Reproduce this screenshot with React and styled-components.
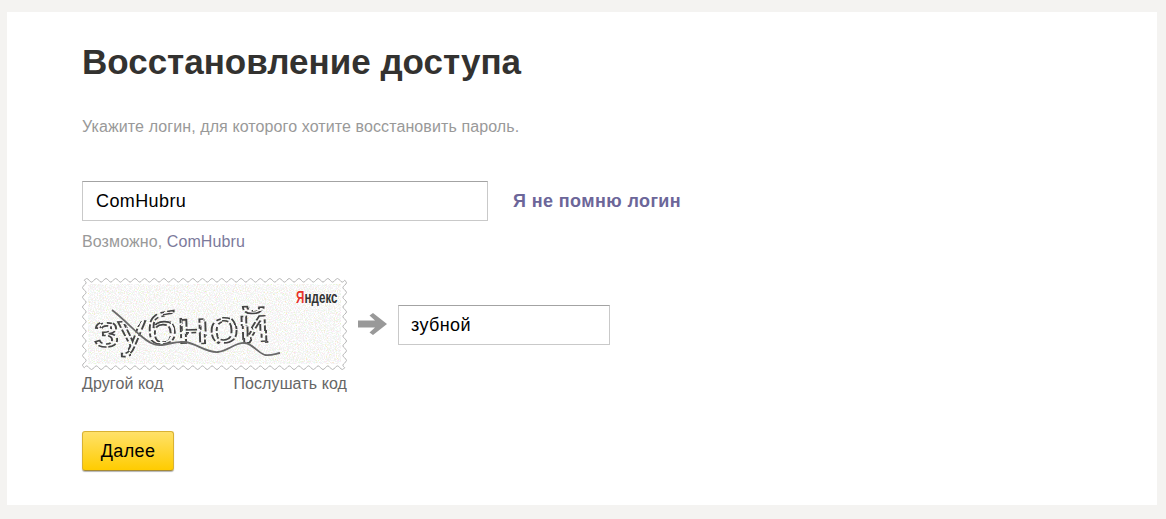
import React from "react";
import styled, { createGlobalStyle } from "styled-components";

const Global = createGlobalStyle`
  html, body {
    margin: 0;
    padding: 0;
    background: #f4f3f1;
  }
  body {
    font-family: "Liberation Sans", Arial, sans-serif;
  }
`;

const Page = styled.div`
  padding: 12px 9px 14px 7px;
`;

const Card = styled.main`
  height: 493px;
  box-sizing: border-box;
  padding: 29px 75px 0;
  background: #fff;
`;

const Title = styled.h1`
  margin: 0;
  font-size: 35px;
  line-height: 42px;
  font-weight: 700;
  color: #333230;
`;

const Lead = styled.p`
  margin: 34px 0 0;
  font-size: 16px;
  line-height: 20px;
  letter-spacing: 0.1px;
  color: #999;
`;

const LoginRow = styled.div`
  display: flex;
  align-items: center;
  gap: 25px;
  margin-top: 44px;
`;

const Field = styled.input`
  box-sizing: border-box;
  width: ${(p) => p.$width}px;
  height: 40px;
  padding: 0 13px;
  border: 1px solid #c9c9c9;
  border-top-color: #a3a3a3;
  border-radius: 0;
  outline: none;
  background: #fff;
  font-family: inherit;
  font-size: 18px;
  letter-spacing: 0.4px;
  color: #000;
`;

const Forgot = styled.a`
  font-size: 18px;
  font-weight: 700;
  letter-spacing: 0.4px;
  color: #6c6699;
  text-decoration: none;
`;

const Hint = styled.div`
  margin-top: 12px;
  font-size: 16px;
  line-height: 18px;
  letter-spacing: 0.1px;
  color: #999;
`;

const HintLink = styled.a`
  color: #7c7a9c;
`;

const CaptchaRow = styled.div`
  display: flex;
  align-items: flex-start;
  margin-top: 27px;
`;

const CaptchaBox = styled.div`
  width: 265px;
`;

const CaptchaLinks = styled.div`
  display: flex;
  justify-content: space-between;
  margin-top: 4px;
  font-size: 16px;
  line-height: 20px;
  letter-spacing: 0.1px;
`;

const CaptchaLink = styled.a`
  color: #666;
`;

const CaptchaImage = styled.svg`
  display: block;
`;

const ArrowIcon = styled.svg`
  display: block;
  margin: 35px 11px 0;
`;

const AnswerField = styled(Field)`
  margin-top: 27px;
  padding: 0 12px;
`;

const NextButton = styled.button`
  display: block;
  width: 92px;
  height: 40px;
  margin-top: 37px;
  padding: 0;
  border: 1px solid #d9b233;
  border-bottom-color: #a58a35;
  border-radius: 3px;
  background: linear-gradient(#ffe169, #ffcc00);
  box-shadow: 0 1px 1px rgba(0, 0, 0, 0.3);
  font-family: inherit;
  font-size: 18px;
  letter-spacing: 0.4px;
  color: #000;
`;

// wavy stamp edge of the captcha picture
function stampPath(w, h, period, amp) {
  const inset = amp + 0.5;
  const iw = w - inset * 2;
  const ih = h - inset * 2;
  const nx = Math.round(iw / period);
  const ny = Math.round(ih / period);
  const wave = (i) => Math.sin((i / 8) * Math.PI * 2) * amp;
  const pts = [];
  for (let i = 0; i < nx * 8; i++) pts.push([inset + (i / (nx * 8)) * iw, inset - wave(i)]);
  for (let i = 0; i < ny * 8; i++) pts.push([w - inset + wave(i), inset + (i / (ny * 8)) * ih]);
  for (let i = 0; i < nx * 8; i++) pts.push([w - inset - (i / (nx * 8)) * iw, h - inset + wave(i)]);
  for (let i = 0; i < ny * 8; i++) pts.push([inset - wave(i), h - inset - (i / (ny * 8)) * ih]);
  return "M" + pts.map((p) => `${p[0].toFixed(2)} ${p[1].toFixed(2)}`).join("L") + "Z";
}

function Captcha() {
  return (
    <CaptchaImage width="265" height="92" viewBox="0 0 265 92">
      <defs>
        <filter id="speckle" x="0" y="0" width="100%" height="100%">
          <feTurbulence type="fractalNoise" baseFrequency="0.9" numOctaves="2" seed="4" />
          <feColorMatrix
            type="matrix"
            values="1.2 0 0 0 0.05  0 1.2 0 0 0.05  0 0 1.2 0 0.08  1.5 1.5 0 0 -1.3"
          />
        </filter>
        <filter id="wobble" x="-5%" y="-10%" width="110%" height="120%">
          <feTurbulence type="fractalNoise" baseFrequency="0.035" numOctaves="1" seed="7" />
          <feDisplacementMap in="SourceGraphic" scale="7" />
        </filter>
      </defs>
      <path d={stampPath(265, 92, 9.7, 1.8)} fill="#fff" stroke="#b4b4b4" strokeWidth="1" />
      <rect x="6" y="6" width="253" height="80" filter="url(#speckle)" />
      <g filter="url(#wobble)">
        <text
          x="12"
          y="66"
          fontFamily="Liberation Sans"
          fontSize="46"
          textLength="176"
          lengthAdjust="spacingAndGlyphs"
          fill="none"
          stroke="#444"
          strokeWidth="1.6"
          strokeDasharray="7 2 10 3 4 2"
          transform="rotate(-2 100 60)"
        >
          зубной
        </text>
      </g>
      <path
        d="M30 32 C38 38 50 50 58 57 C66 64 72 68 80 67 C88 66 94 63 103 64 C114 65 124 75 136 74 C146 73 154 64 163 65 C171 66 176 75 183 77 C188 78 193 76 198 75"
        fill="none"
        stroke="#6a6a6a"
        strokeWidth="1.8"
      />
      <g transform="translate(214 25) scale(1 1.5)" fontFamily="Liberation Sans" fontSize="11.6" fontWeight="700">
        <text fill="#e8332a">Я</text>
        <text x="8.6" fill="#333">ндекс</text>
      </g>
    </CaptchaImage>
  );
}

export default function App() {
  return (
    <Page>
      <Global />
      <Card>
        <Title>Восстановление доступа</Title>
        <Lead>Укажите логин, для которого хотите восстановить пароль.</Lead>
        <LoginRow>
          <Field $width={406} defaultValue="ComHubru" />
          <Forgot href="#">Я не помню логин</Forgot>
        </LoginRow>
        <Hint>
          Возможно, <HintLink>ComHubru</HintLink>
        </Hint>
        <CaptchaRow>
          <CaptchaBox>
            <Captcha />
            <CaptchaLinks>
              <CaptchaLink>Другой код</CaptchaLink>
              <CaptchaLink>Послушать код</CaptchaLink>
            </CaptchaLinks>
          </CaptchaBox>
          <ArrowIcon width="29" height="22" viewBox="0 0 29 22">
            <path d="M0 7.5H17L11.5 2.5L15 0L29 11L15 22L11.5 19.5L17 14.5H0Z" fill="#999" />
          </ArrowIcon>
          <AnswerField $width={212} defaultValue="зубной" />
        </CaptchaRow>
        <NextButton>Далее</NextButton>
      </Card>
    </Page>
  );
}
